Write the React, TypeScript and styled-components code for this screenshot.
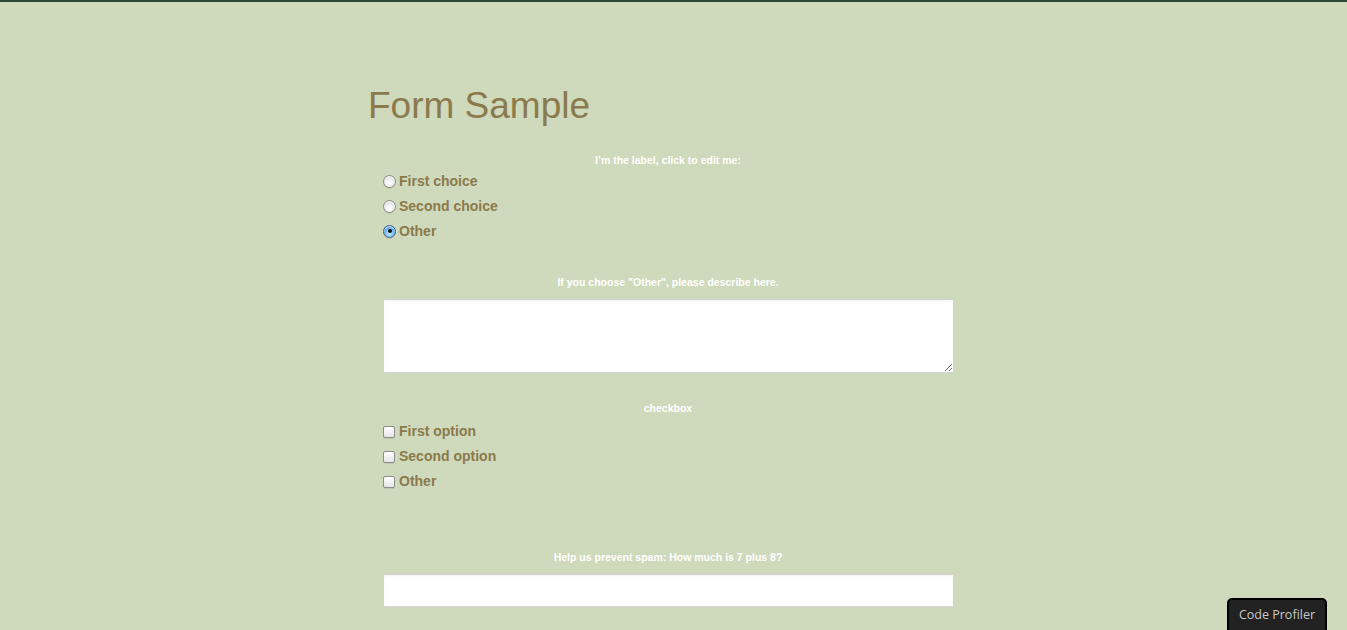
import React from 'react';
import styled, { createGlobalStyle } from 'styled-components';

const GlobalStyle = createGlobalStyle`
  html, body {
    margin: 0;
    padding: 0;
  }
  body {
    background: #cfd9bb;
    border-top: 2px solid #2c4735;
    font-family: "Liberation Sans", Arial, Helvetica, sans-serif;
    min-height: 628px;
  }
`;

const Page = styled.div`
  width: 611px;
  margin: 0 auto;
  padding-top: 82px;
`;

const Title = styled.h1`
  margin: 0 0 26px 0;
  font-size: 37px;
  line-height: 43px;
  font-weight: normal;
  color: #8a7a4c;
`;

const Form = styled.form`
  display: flex;
  flex-direction: column;
  padding-left: 15px;
  width: 570px;
`;

const FieldLabel = styled.label<{ $gap: number; $after: number }>`
  display: block;
  margin-top: ${(p) => p.$gap}px;
  margin-bottom: ${(p) => p.$after}px;
  text-align: center;
  color: #ffffff;
  font-size: 10.5px;
  line-height: 14px;
  font-weight: bold;
`;

const Options = styled.div`
  display: flex;
  flex-direction: column;
`;

const Option = styled.label`
  display: flex;
  align-items: center;
  height: 25px;
  gap: 3px;
  color: #8a7a4c;
  font-size: 14px;
  font-weight: bold;
  cursor: pointer;
`;

const Radio = styled.input.attrs({ type: 'radio' })`
  appearance: none;
  -webkit-appearance: none;
  width: 13px;
  height: 13px;
  margin: 1px 0 0 0;
  border-radius: 50%;
  border: 1px solid #8c8c8c;
  background: radial-gradient(circle at 50% 70%, #ffffff 0%, #f2f2f2 40%, #cfcfcf 100%);
  box-shadow: inset 0 1px 1px rgba(255, 255, 255, 0.9), 0 1px 0 rgba(0, 0, 0, 0.08);
  box-sizing: border-box;
  position: relative;

  &:checked {
    border-color: #3c5f8f;
    background: radial-gradient(circle at 50% 70%, #c9ecff 0%, #6db6ef 50%, #2f7bd0 100%);
  }

  &:checked::after {
    content: '';
    position: absolute;
    left: 3.5px;
    top: 3.5px;
    width: 4px;
    height: 4px;
    border-radius: 50%;
    background: #111;
  }
`;

const Checkbox = styled.input.attrs({ type: 'checkbox' })`
  appearance: none;
  -webkit-appearance: none;
  width: 12px;
  height: 12px;
  margin: 2px 1px 0 0;
  border-radius: 2px;
  border: 1px solid #8c8c8c;
  background: linear-gradient(#ffffff, #e4e4e4);
  box-shadow: 0 1px 0 rgba(0, 0, 0, 0.08);
  box-sizing: border-box;
`;

const TextArea = styled.textarea`
  display: block;
  width: 571px;
  height: 74px;
  box-sizing: border-box;
  border: 1px solid #d2d2d2;
  background: #ffffff;
  box-shadow: inset 0 1px 2px rgba(0, 0, 0, 0.06);
  padding: 4px;
  font-family: "Liberation Sans", Arial, sans-serif;
  font-size: 13px;
  resize: both;
  margin: 0;
`;

const TextInput = styled.input`
  display: block;
  width: 571px;
  height: 33px;
  box-sizing: border-box;
  border: 1px solid #d2d2d2;
  background: #ffffff;
  box-shadow: inset 0 1px 2px rgba(0, 0, 0, 0.06);
  padding: 4px;
  font-family: "Liberation Sans", Arial, sans-serif;
  font-size: 13px;
  margin: 0;
`;

const ProfilerButton = styled.button`
  position: fixed;
  right: 20px;
  bottom: -10px;
  width: 100px;
  height: 42px;
  padding: 0 0 10px 0;
  background: #222222;
  border: 2px solid #000000;
  border-radius: 5px;
  color: #c8c8c8;
  font-family: "Open Sans", "DejaVu Sans", sans-serif;
  font-size: 12.5px;
  cursor: pointer;
`;

const radioChoices = ['First choice', 'Second choice', 'Other'];
const checkOptions = ['First option', 'Second option', 'Other'];

export default function App() {
  return (
    <>
      <GlobalStyle />
      <Page>
        <Title>Form Sample</Title>
        <Form onSubmit={(e) => e.preventDefault()}>
          <FieldLabel $gap={0} $after={1}>I&rsquo;m the label, click to edit me:</FieldLabel>
          <Options>
            {radioChoices.map((c, i) => (
              <Option key={c}>
                <Radio name="choice" defaultChecked={i === 2} />
                {c}
              </Option>
            ))}
          </Options>

          <FieldLabel $gap={32} $after={10}>If you choose "Other", please describe here.</FieldLabel>
          <TextArea />

          <FieldLabel $gap={28} $after={3}>checkbox</FieldLabel>
          <Options>
            {checkOptions.map((c) => (
              <Option key={c}>
                <Checkbox />
                {c}
              </Option>
            ))}
          </Options>

          <FieldLabel $gap={57} $after={10}>Help us prevent spam: How much is 7 plus 8?</FieldLabel>
          <TextInput type="text" />
        </Form>
      </Page>
      <ProfilerButton type="button">Code Profiler</ProfilerButton>
    </>
  );
}
